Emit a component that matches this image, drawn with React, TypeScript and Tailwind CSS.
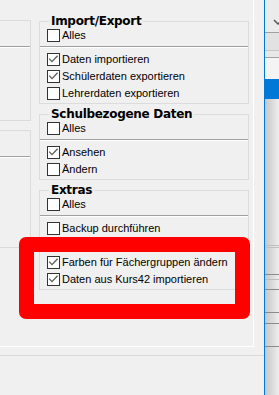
import React from "react";

function Cb({ checked }: { checked?: boolean }) {
  return (
    <span className="mt-px flex h-[13px] w-[13px] shrink-0 border border-[#333333] bg-white">
      {checked && (
        <svg width="11" height="11" viewBox="0 0 11 11">
          <path d="M1.2 4.6 L4 7.6 L9.6 1.8" stroke="#5a5a5a" strokeWidth="1.3" fill="none" />
        </svg>
      )}
    </span>
  );
}

function Row({ label, checked, h }: { label?: string; checked?: boolean; h: string }) {
  return (
    <div className={`flex items-start gap-[2px] pl-[7px] ${h}`}>
      {label !== undefined && (
        <>
          <Cb checked={checked} />
          <span className="whitespace-nowrap text-[11px] leading-[15px] text-black">{label}</span>
        </>
      )}
    </div>
  );
}

function Group({
  title,
  rows,
  className = "",
}: {
  title: string;
  rows: { label?: string; checked?: boolean }[];
  className?: string;
}) {
  return (
    <div className={`w-[210px] border border-[#dcdcdc] ${className}`}>
      <div className="-mt-[8px] ml-[9px] w-fit bg-[#f0f0f0] px-[2px] font-['DejaVu_Sans',Verdana,sans-serif] text-[12px] font-bold leading-[14px] tracking-[-0.3px] text-black whitespace-nowrap">
        {title}
      </div>
      <Row label="Alles" h="h-[16px]" />
      <div className="mt-[2px] h-px bg-[#a0a0a0]" />
      <div className="h-px bg-white" />
      <div className="pt-[4px]">
        {rows.map((r, i) => (
          <Row key={i} label={r.label} checked={r.checked} h="h-[17px]" />
        ))}
      </div>
    </div>
  );
}

function LeftBox({ h, className = "" }: { h: string; className?: string }) {
  return (
    <div className={`border-t border-r border-b border-[#dcdcdc] ${h} ${className}`}>
      <div className="h-[25px]" />
      <div className="h-px bg-[#a0a0a0]" />
      <div className="h-px bg-white" />
    </div>
  );
}

export default function App() {
  return (
    <div className="relative flex h-[395px] w-[279px] overflow-hidden bg-[#f0f0f0] font-['Liberation_Sans',Arial,sans-serif]">
      <div className="flex w-[264px] flex-col">
        <div className="flex h-[347px] w-[254px] border-r border-b border-white">
          <div className="flex w-[31px] flex-col pt-[20px]">
            <LeftBox h="h-[101px]" />
            <LeftBox h="h-[118px]" className="mt-[9px]" />
          </div>
          <div className="ml-[8px] flex w-[210px] flex-col pt-[21px]">
            <Group
              title="Import/Export"
              rows={[
                { label: "Daten importieren", checked: true },
                { label: "Schülerdaten exportieren", checked: true },
                { label: "Lehrerdaten exportieren" },
              ]}
            />
            <Group
              className="mt-[10px]"
              title="Schulbezogene Daten"
              rows={[{ label: "Ansehen", checked: true }, { label: "Ändern" }]}
            />
            <Group
              className="mt-[10px]"
              title="Extras"
              rows={[
                { label: "Backup durchführen" },
                {},
                { label: "Farben für Fächergruppen ändern", checked: true },
                { label: "Daten aus Kurs42 importieren", checked: true },
              ]}
            />
          </div>
        </div>
        <div className="mt-[8px] h-px bg-[#d9d9d9]" />
      </div>
      <div className="w-px bg-[#0078d7]" />
      <div className="flex flex-1 flex-col">
        <div className="h-[32px] bg-[#ebebeb]">
          <svg width="14" height="32" viewBox="0 0 14 32">
            <path d="M9 20 L13 24 L17 20" stroke="#555555" strokeWidth="1.5" fill="none" />
          </svg>
        </div>
        <div className="h-px bg-[#a0a0a0]" />
        <div className="h-[17px] bg-[#e2e2e2]" />
        <div className="h-px bg-[#c8c8c8]" />
        <div className="h-[6px] bg-[#e8e8e8]" />
        <div className="h-px bg-[#a0a0a0]" />
        <div className="h-[21px] bg-[#f4f4f4]" />
        <div className="h-[20px] bg-[#0078d7]" />
        <div className="flex flex-1 flex-col bg-linear-to-r from-[#c6c6c6] to-[#eeeeee]">
          <div className="h-[146px]" />
          <div className="h-px bg-[#c0c0c0]" />
          <div className="h-px" />
          <div className="h-px bg-[#c0c0c0]" />
          <div className="h-[26px]" />
          <div className="h-px bg-[#8a8a8a]" />
          <div className="h-[4px]" />
          <div className="h-px bg-[#bdbdbd]" />
          <div className="h-[9px]" />
          <div className="h-px bg-[#8a8a8a]" />
          <div className="h-[22px]" />
          <div className="h-px bg-[#8a8a8a]" />
          <div className="h-[10px]" />
          <div className="h-px bg-[#8a8a8a]" />
          <div className="h-[22px]" />
          <div className="h-px bg-[#8a8a8a]" />
        </div>
      </div>
      <div className="absolute left-[19px] top-[237px] h-[82px] w-[231px] rounded-[7px] border-[15px] border-[#ff0000]" />
    </div>
  );
}
